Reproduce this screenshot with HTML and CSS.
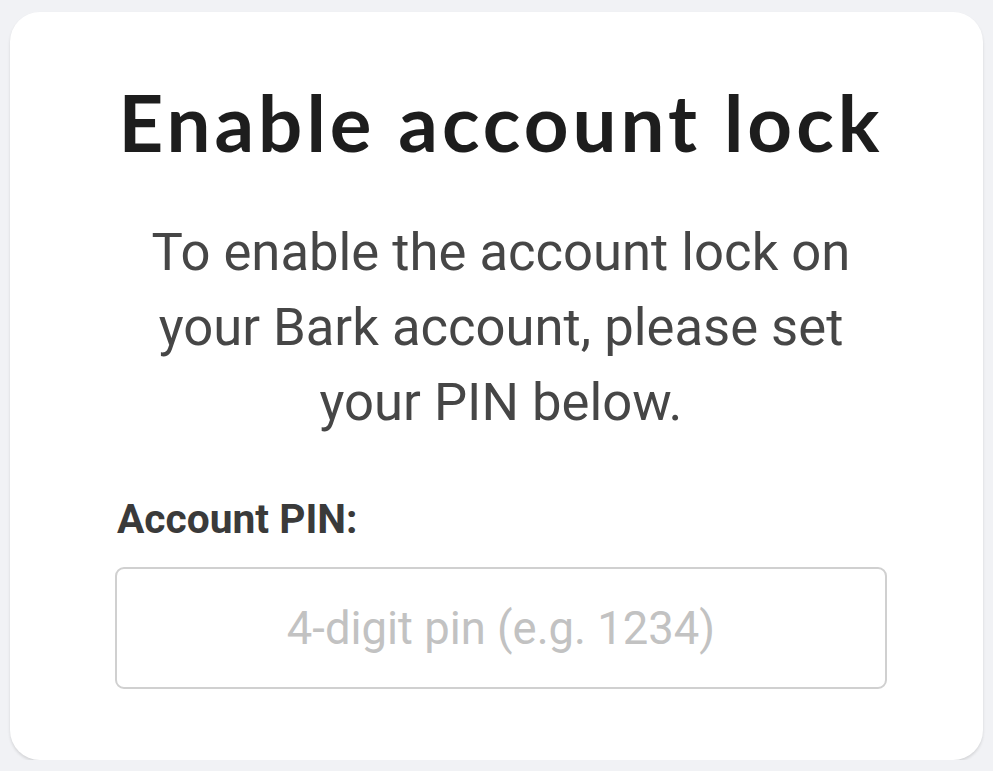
FILE: index.html
```html
<!DOCTYPE html>
<html lang="en">
<head>
    <meta charset="UTF-8">
    <meta name="viewport" content="width=device-width, initial-scale=1.0">
    <title>Enable account lock</title>
    <link rel="stylesheet" href="styles.css">
</head>
<body>
    <div class="card">
        <h1 class="title">Enable account lock</h1>
        <p class="intro">To enable the account lock on your Bark account, please set your PIN below.</p>
        <label class="pin-label" for="pin">Account PIN:</label>
        <input class="pin-input" id="pin" type="text" placeholder="4-digit pin (e.g. 1234)">
    </div>
</body>
</html>
```

FILE: styles.css
```css
body {
    margin: 0;
    background-color: #f1f2f5;
    font-family: Roboto, "Liberation Sans", sans-serif;
    padding: 12px 10px 0 10px;
}

.card {
    background-color: #ffffff;
    border-radius: 30px;
    height: 748px;
    box-sizing: border-box;
    padding: 63px 96px 0 105px;
    box-shadow: 0 2px 3px rgba(0, 0, 0, 0.12);
}

.title {
    margin: 0;
    text-align: center;
    font-family: Lato, sans-serif;
    font-weight: 700;
    font-size: 78px;
    line-height: 94px;
    color: #1d1d1d;
    letter-spacing: 4px;
}

.intro {
    margin: 46px 0 0 0;
    padding: 0 20px;
    text-align: center;
    font-size: 52.6px;
    line-height: 75px;
    color: #464646;
}

.pin-label {
    display: block;
    margin-top: 55px;
    font-weight: 700;
    font-size: 40.7px;
    line-height: 48px;
    color: #3a3a3a;
    padding-left: 2px;
}

.pin-input {
    display: block;
    margin-top: 24px;
    width: 100%;
    height: 122px;
    box-sizing: border-box;
    border: 2px solid #d0d0d0;
    border-radius: 9px;
    text-align: center;
    font-family: Roboto, sans-serif;
    font-size: 45.4px;
}

.pin-input::placeholder {
    color: #c2c2c2;
}
```
